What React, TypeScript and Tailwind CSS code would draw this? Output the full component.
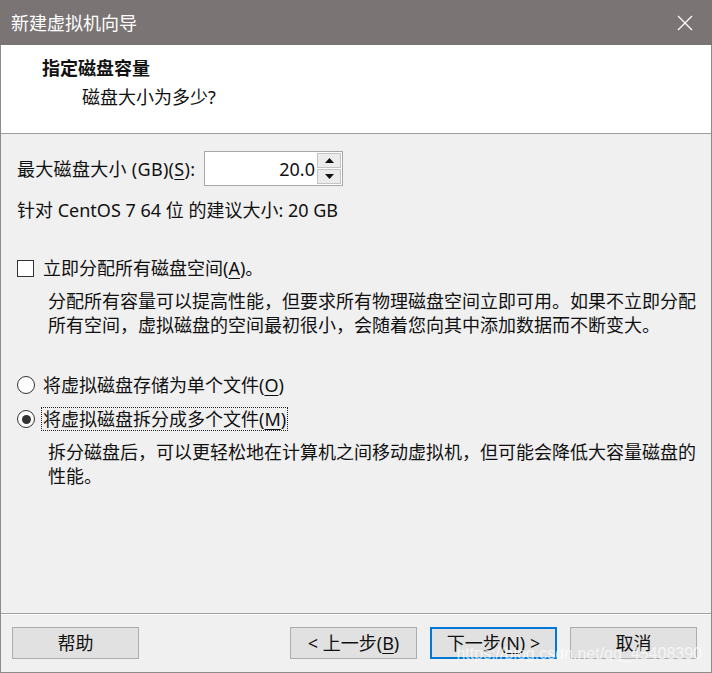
import React from 'react';

const U = ({ children }: { children: React.ReactNode }) => (
  <span className="underline decoration-1 underline-offset-[3px]">{children}</span>
);

function Radio({ checked }: { checked?: boolean }) {
  return (
    <span className="flex h-[18px] w-[18px] shrink-0 items-center justify-center rounded-full border border-[#333] bg-white">
      {checked && <span className="h-[9px] w-[9px] rounded-full bg-[#333]" />}
    </span>
  );
}

function Btn({ children, primary }: { children: React.ReactNode; primary?: boolean }) {
  return (
    <button
      type="button"
      className={
        primary
          ? 'flex h-[32px] w-[127px] items-center justify-center border-2 border-[#0078d7] bg-[#e1e1e1] leading-none'
          : 'flex h-[32px] w-[127px] items-center justify-center border border-[#adadad] bg-[#e1e1e1] leading-none'
      }
    >
      {children}
    </button>
  );
}

export default function App() {
  return (
    <div className="relative flex h-[673px] w-[712px] flex-col bg-[#f0f0f0] text-[18px] text-[#111] [font-family:'Noto_Sans','Noto_Sans_CJK_SC',sans-serif]">
      {/* title bar */}
      <div className="flex h-[45px] shrink-0 items-center justify-between bg-[#7a7574] pl-[11px] pr-[19px] text-white">
        <span className="leading-none">新建虚拟机向导</span>
        <svg width="16" height="16" viewBox="0 0 16 16" aria-hidden="true">
          <path d="M1 1L15 15M15 1L1 15" stroke="white" strokeWidth="1.3" />
        </svg>
      </div>

      <div className="flex flex-1 flex-col border-x border-b border-[#8c8c8c]">
        {/* header */}
        <div className="h-[89px] shrink-0 border-b border-[#a0a0a0] bg-white pt-[11px]">
          <div className="pl-[41px] font-bold leading-[24px]">指定磁盘容量</div>
          <div className="mt-[5px] pl-[81px] leading-[24px]">磁盘大小为多少?</div>
        </div>

        {/* content */}
        <div className="flex-1 pl-[16px] pr-[14px]">
          <div className="mt-[17px] flex h-[35px] items-center">
            <span className="w-[187px] leading-none tracking-[0.3px]">
              最大磁盘大小 (GB)(<U>S</U>):
            </span>
            <div className="flex h-[35px] w-[139px] border border-[#a8a8a8] bg-white">
              <div className="flex flex-1 items-center justify-end pr-[2px] leading-none">20.0</div>
              <div className="flex w-[25px] flex-col gap-[1px] p-[1px] pl-0">
                <div className="flex flex-1 items-center justify-center border border-[#c4c4c4] bg-[#ececec]">
                  <svg width="9" height="5" viewBox="0 0 9 5"><path d="M4.5 0L9 5H0Z" fill="#111" /></svg>
                </div>
                <div className="flex flex-1 items-center justify-center border border-[#c4c4c4] bg-[#ececec]">
                  <svg width="9" height="5" viewBox="0 0 9 5"><path d="M0 0H9L4.5 5Z" fill="#111" /></svg>
                </div>
              </div>
            </div>
          </div>

          <div className="mt-[12px] leading-[24px]">针对 CentOS 7 64 位 的建议大小: 20 GB</div>

          <div className="mt-[34px] flex h-[24px] items-center gap-[9px]">
            <span className="h-[17px] w-[17px] shrink-0 border border-[#333] bg-white" />
            <span className="leading-none">
              立即分配所有磁盘空间(<U>A</U>)。
            </span>
          </div>

          <p className="mt-[9px] pl-[31px] leading-[24px]">
            分配所有容量可以提高性能，但要求所有物理磁盘空间立即可用。如果不立即分配所有空间，虚拟磁盘的空间最初很小，会随着您向其中添加数据而不断变大。
          </p>

          <div className="mt-[36px] flex h-[24px] items-center gap-[8px]">
            <Radio />
            <span className="leading-none">
              将虚拟磁盘存储为单个文件(<U>O</U>)
            </span>
          </div>

          <div className="mt-[10px] flex h-[24px] items-center gap-[6px]">
            <Radio checked />
            <span className="border border-dotted border-[#222] px-[1px] py-[2px] leading-none">
              将虚拟磁盘拆分成多个文件(<U>M</U>)
            </span>
          </div>

          <p className="mt-[9px] pl-[31px] leading-[24px]">
            拆分磁盘后，可以更轻松地在计算机之间移动虚拟机，但可能会降低大容量磁盘的性能。
          </p>
        </div>

        {/* footer */}
        <div className="flex h-[59px] shrink-0 items-start border-t border-[#a0a0a0] pl-[11px] pr-[14px] pt-[13px] shadow-[inset_0_1px_0_#fff]">
          <Btn>帮助</Btn>
          <div className="ml-auto flex gap-[13px]">
            <Btn>
              &lt; 上一步(<U>B</U>)
            </Btn>
            <Btn primary>
              下一步(<U>N</U>) &gt;
            </Btn>
            <Btn>取消</Btn>
          </div>
        </div>
      </div>

      <span className="pointer-events-none absolute bottom-[11px] right-[10px] text-[16px] leading-none text-white/70 [font-family:'Liberation_Sans',sans-serif]">
        https://blog.csdn.net/qq_45408390
      </span>
    </div>
  );
}
